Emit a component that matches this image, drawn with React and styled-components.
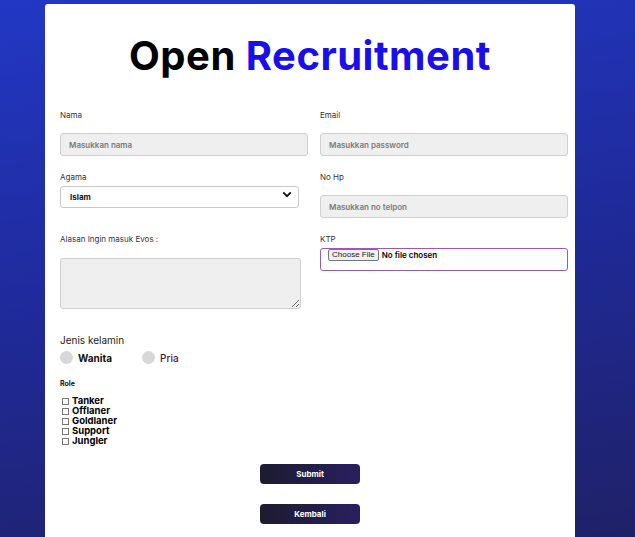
import styled, { createGlobalStyle } from "styled-components";

const GlobalStyle = createGlobalStyle`
  html, body {
    margin: 0;
    padding: 0;
    height: 100%;
  }
  body {
    background: linear-gradient(170deg, #2237c4 0%, #1f2a99 50%, #1f2167 100%);
    font-family: "Inter", "Liberation Sans", sans-serif;
    overflow: hidden;
  }
`;

function App() {
  return (
    <>
      <GlobalStyle />
      <Page>
        <Card>
          <Title>
            Open <span>Recruitment</span>
          </Title>
          <FormGrid>
            <Field>
              <Label>Nama</Label>
              <TextInput placeholder="Masukkan nama" />
            </Field>
            <Field>
              <Label>Email</Label>
              <TextInput placeholder="Masukkan password" />
            </Field>
            <Field>
              <Label $gap={2}>Agama</Label>
              <SelectWrap>
                <Select defaultValue="Islam">
                  <option>Islam</option>
                  <option>Kristen</option>
                  <option>Hindu</option>
                </Select>
                <Chevron viewBox="0 0 12 8">
                  <path d="M1.5 1.5 L6 6 L10.5 1.5" fill="none" stroke="#111" strokeWidth="2.2" />
                </Chevron>
              </SelectWrap>
            </Field>
            <Field>
              <Label>No Hp</Label>
              <TextInput placeholder="Masukkan no telpon" />
            </Field>
            <Field>
              <Label>Alasan Ingin masuk Evos :</Label>
              <TextArea />
            </Field>
            <Field>
              <Label $gap={4}>KTP</Label>
              <FileBox>
                <FileButton>Choose File</FileButton>
                <FileText>No file chosen</FileText>
              </FileBox>
            </Field>
          </FormGrid>

          <GenderTitle>Jenis kelamin</GenderTitle>
          <RadioRow>
            <RadioItem>
              <RadioDot />
              <RadioLabel>Wanita</RadioLabel>
            </RadioItem>
            <RadioItem>
              <RadioDot />
              <RadioLabel $muted>Pria</RadioLabel>
            </RadioItem>
          </RadioRow>

          <RoleTitle>Role</RoleTitle>
          <RoleList>
            {["Tanker", "Offlaner", "Goldlaner", "Support", "Jungler"].map((r) => (
              <RoleItem key={r}>
                <Box />
                {r}
              </RoleItem>
            ))}
          </RoleList>

          <Buttons>
            <Button>Submit</Button>
            <Button>Kembali</Button>
          </Buttons>
        </Card>
      </Page>
    </>
  );
}

export default App;

const Page = styled.div`
  padding: 4px 0 0 45px;
  height: 537px;
  box-sizing: border-box;
`;

const Card = styled.div`
  width: 530px;
  height: 533px;
  background: #fff;
  border-radius: 3px 3px 0 0;
  padding: 27px 15px 0 15px;
  box-sizing: border-box;
  font-family: "Inter", "Liberation Sans", sans-serif;
`;

const Title = styled.h1`
  margin: 0;
  text-align: center;
  font-size: 40px;
  font-weight: 700;
  line-height: 50px;
  color: #000;
  letter-spacing: 0.5px;

  span {
    color: #1a0fe8;
  }
`;

const FormGrid = styled.div`
  display: grid;
  grid-template-columns: 248px 248px;
  column-gap: 12px;
  margin-top: 29px;
`;

const Field = styled.div`
  display: flex;
  flex-direction: column;
  align-items: flex-start;
  min-height: 62px;
`;

const Label = styled.label`
  font-size: 8px;
  color: #333;
  line-height: 10px;
  margin-bottom: ${(p) => (p.$gap !== undefined ? p.$gap : 13)}px;
`;

const TextInput = styled.input`
  width: 248px;
  height: 23px;
  box-sizing: border-box;
  background: #efefef;
  border: 1px solid #cfcfcf;
  border-radius: 3px;
  padding: 0 8px;
  font-family: inherit;
  font-size: 8px;
  font-weight: 600;
  outline: none;

  &::placeholder {
    color: #7a7a7a;
  }
`;

const SelectWrap = styled.div`
  position: relative;
  width: 239px;
`;

const Select = styled.select`
  appearance: none;
  width: 239px;
  height: 22px;
  box-sizing: border-box;
  background: #fff;
  border: 1px solid #c9c9c9;
  border-radius: 3px;
  padding: 0 9px;
  font-family: inherit;
  font-size: 8px;
  font-weight: 700;
  color: #1a1020;
  outline: none;
`;

const Chevron = styled.svg`
  position: absolute;
  right: 7px;
  top: 7px;
  width: 10px;
  height: 7px;
  pointer-events: none;
`;

const TextArea = styled.textarea`
  width: 241px;
  height: 51px;
  box-sizing: border-box;
  background: #efefef;
  border: 1px solid #cfcfcf;
  border-radius: 3px;
  margin-top: 1px;
  resize: vertical;
  outline: none;
`;

const FileBox = styled.div`
  width: 248px;
  height: 23px;
  box-sizing: border-box;
  border: 1px solid #9b59b6;
  border-radius: 3px;
  display: flex;
  align-items: flex-start;
  gap: 3px;
  padding: 0 0 0 7px;
`;

const FileButton = styled.span`
  font-family: "Liberation Sans", Arial, sans-serif;
  font-size: 8px;
  line-height: 10px;
  color: #222;
  background: #efefef;
  border: 1px solid #767676;
  border-radius: 2px;
  padding: 0 3px;
`;

const FileText = styled.span`
  font-size: 8px;
  font-weight: 600;
  line-height: 12px;
  color: #000;
`;

const GenderTitle = styled.div`
  margin-top: 25px;
  font-size: 10px;
  color: #222;
  line-height: 12px;
`;

const RadioRow = styled.div`
  display: flex;
  gap: 30px;
  margin-top: 5px;
`;

const RadioItem = styled.div`
  display: flex;
  align-items: center;
  gap: 5px;
`;

const RadioDot = styled.span`
  width: 13px;
  height: 13px;
  border-radius: 50%;
  background: #d8d8d8;
`;

const RadioLabel = styled.span`
  font-size: 10px;
  font-weight: ${(p) => (p.$muted ? 500 : 700)};
  color: ${(p) => (p.$muted ? "#4f1236" : "#111")};
`;

const RoleTitle = styled.div`
  margin-top: 15px;
  font-size: 7px;
  font-weight: 700;
  color: #111;
`;

const RoleList = styled.div`
  margin-top: 8px;
  display: flex;
  flex-direction: column;
`;

const RoleItem = styled.div`
  display: flex;
  align-items: center;
  gap: 3px;
  font-size: 9.5px;
  font-weight: 700;
  line-height: 10px;
  height: 10px;
  color: #000;
`;

const Box = styled.span`
  width: 5px;
  height: 5px;
  margin-left: 2px;
  border: 1px solid #777;
`;

const Buttons = styled.div`
  display: flex;
  flex-direction: column;
  align-items: center;
  gap: 20px;
  margin-top: 18px;
`;

const Button = styled.button`
  width: 100px;
  height: 20px;
  border: none;
  border-radius: 4px;
  background: linear-gradient(90deg, #1c1c30 0%, #291f5f 100%);
  color: #fff;
  font-family: inherit;
  font-size: 8px;
  font-weight: 700;
  cursor: pointer;
`;
